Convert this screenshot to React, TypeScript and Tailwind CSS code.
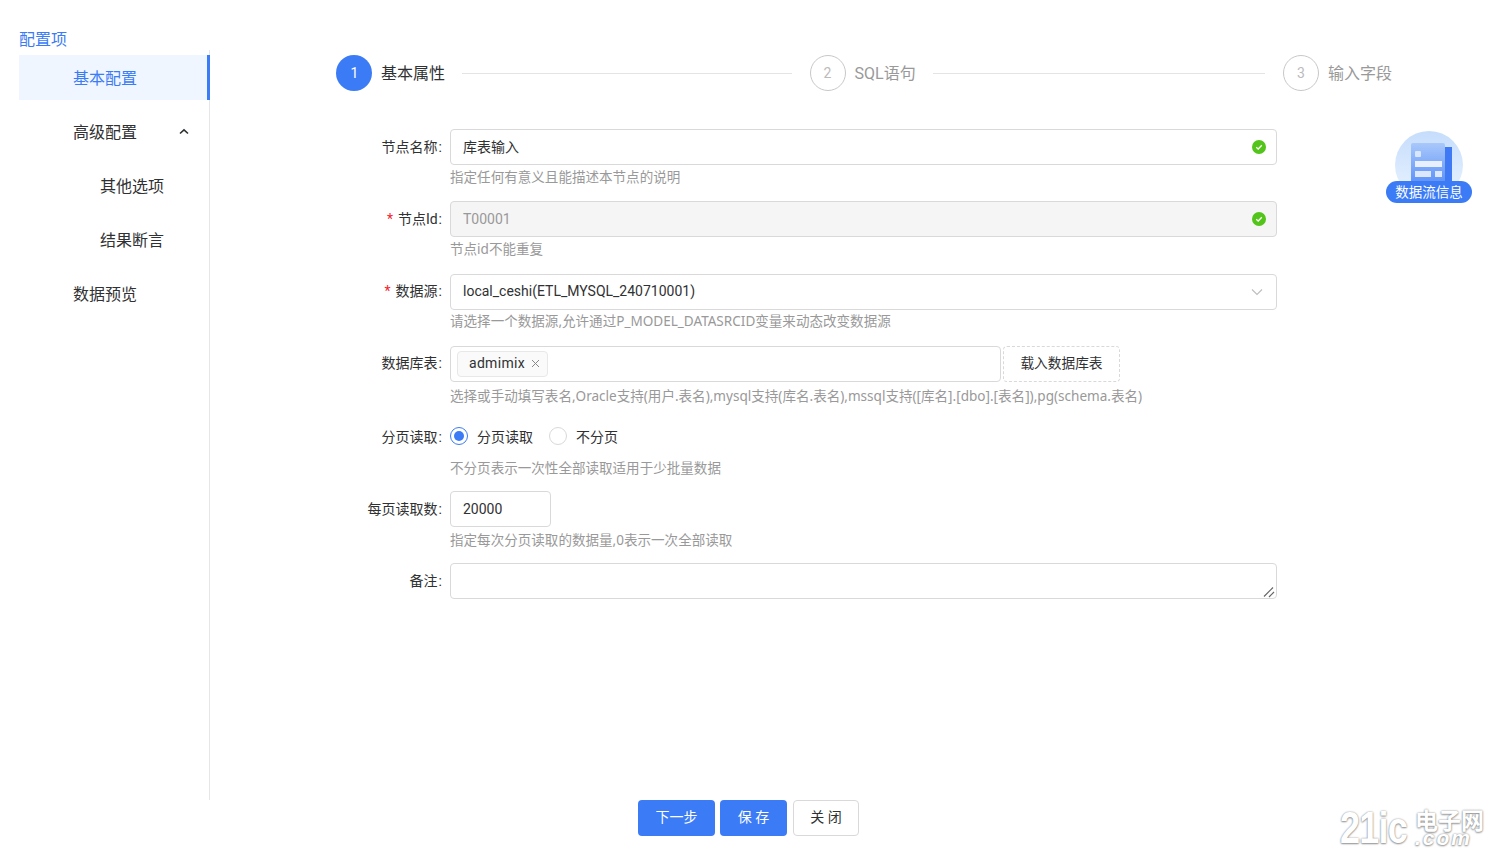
import type { ReactNode } from "react";

const font = "font-['Roboto','Noto_Sans_CJK_SC',sans-serif]";

function CheckBadge() {
  return (
    <svg width="14" height="14" viewBox="0 0 14 14" className="shrink-0">
      <circle cx="7" cy="7" r="7" fill="#52c41a" />
      <path d="M4.2 7.2 6.2 9l3.6-3.8" fill="none" stroke="#fff" strokeWidth="1.3" />
    </svg>
  );
}

function Step({ n, label, active, last }: { n: number; label: string; active?: boolean; last?: boolean }) {
  return (
    <div className={`flex items-center ${last ? "" : "flex-1"}`}>
      <div
        className={
          active
            ? "flex h-9 w-9 shrink-0 items-center justify-center rounded-full bg-[#3b7bf6] pl-[1px] text-sm text-white"
            : "flex h-9 w-9 shrink-0 items-center justify-center rounded-full border border-[#c8c8c8] text-sm text-[#bbbbbb]"
        }
      >
        {n}
      </div>
      <div className={`ml-[9px] shrink-0 pt-[2px] text-base ${active ? "text-[#303133]" : "text-[#999999]"}`}>{label}</div>
      {last ? null : <div className="ml-[17px] mr-[18px] h-px flex-1 bg-[#e4e4e4]" />}
    </div>
  );
}

function Row({ label, required, help, helpClass, labelClass, children }: { label: string; required?: boolean; help?: string; helpClass?: string; labelClass?: string; children: ReactNode }) {
  return (
    <div className="flex h-[72.33px] items-start">
      <div className={`flex h-9 w-[106px] shrink-0 items-center justify-end text-sm text-[#303133] ${labelClass ?? ""}`}>
        {required ? <span className="mr-[5px] text-[#f5222d]">*</span> : null}
        {label}
        <span className="ml-[1px]">:</span>
      </div>
      <div className="ml-2 w-[827px]">
        {children}
        {help ? (
          <div className={`font-['Noto_Sans','Noto_Sans_CJK_SC',sans-serif] text-[13.55px] leading-5 text-[#999999] ${helpClass ?? "mt-[2px]"}`}>{help}</div>
        ) : null}
      </div>
    </div>
  );
}

const box = "flex h-9 items-center rounded border border-[#d9d9d9] pl-[12px] text-sm text-[#303133]";

function Sidebar() {
  return (
    <aside className="w-[210px] shrink-0 pl-[19px]">
      <div className="flex h-[50px] items-end text-base leading-5 text-[#3b7bf6]">配置项</div>
      <div className="h-[750px] border-r border-[#e6e6e6] pt-[5px] text-base text-[#303133]">
        <div className="mr-[-1px] flex h-[45px] items-center border-r-[3px] border-[#3b7bf6] bg-[#f0f6ff] pl-[54px] pt-[2px] text-[#3b7bf6]">基本配置</div>
        <div className="mt-[9px] flex h-[45px] items-center justify-between pl-[54px] pr-[20px] pt-[2px]">
          高级配置
          <svg width="10" height="7" viewBox="0 0 10 7" fill="none" stroke="#303133" strokeWidth="1.6" className="mb-[2px]">
            <path d="M1 5.5 5 1.8l4 3.7" />
          </svg>
        </div>
        <div className="mt-[9px] flex h-[45px] items-center pl-[81px] pt-[2px]">其他选项</div>
        <div className="mt-[9px] flex h-[45px] items-center pl-[81px] pt-[2px]">结果断言</div>
        <div className="mt-[9px] flex h-[45px] items-center pl-[54px] pt-[2px]">数据预览</div>
      </div>
    </aside>
  );
}

function Form() {
  return (
    <div className="mt-[38px]">
      <Row label="节点名称" help="指定任何有意义且能描述本节点的说明">
        <div className={`${box} justify-between pr-[10px]`}>
          库表输入
          <CheckBadge />
        </div>
      </Row>
      <Row label="节点Id" required help="节点id不能重复">
        <div className={`${box} justify-between bg-[#f5f5f5] pr-[10px] text-[#999999]`}>
          T00001
          <CheckBadge />
        </div>
      </Row>
      <Row label="数据源" required help="请选择一个数据源,允许通过P_MODEL_DATASRCID变量来动态改变数据源" helpClass="mt-[1px]" labelClass="pb-[2px]">
        <div className={`${box} justify-between pb-[2px] pr-[13px]`}>
          local_ceshi(ETL_MYSQL_240710001)
          <svg width="12" height="8" viewBox="0 0 12 8" fill="none" stroke="#bdbdbd" strokeWidth="1.1" className="mt-[2px]">
            <path d="M1 1.5 6 6.5l5-5" />
          </svg>
        </div>
      </Row>
      <Row label="数据库表" help="选择或手动填写表名,Oracle支持(用户.表名),mysql支持(库名.表名),mssql支持([库名].[dbo].[表名]),pg(schema.表名)" helpClass="mt-[4px]" labelClass="pb-[2px]">
        <div className="flex items-center gap-[2px]">
          <div className="flex h-9 w-[551px] items-center rounded border border-[#d9d9d9] pl-[6px]">
            <div className="flex h-[26px] items-center rounded-sm border border-[#e8e8e8] bg-[#fafafa] pb-[2px] pl-[11px] pr-[7px] text-sm tracking-[0.3px] text-[#303133]">
              admimix
              <svg width="9" height="9" viewBox="0 0 9 9" stroke="#888888" strokeWidth="1" className="ml-[6px] mt-[2px]">
                <path d="M1 1l7 7M8 1 1 8" />
              </svg>
            </div>
          </div>
          <div className="flex h-9 w-[117px] items-center justify-center rounded border border-dashed border-[#d9d9d9] pb-[2px] text-[13.7px] text-[#303133]">载入数据库表</div>
        </div>
      </Row>
      <Row label="分页读取" help="不分页表示一次性全部读取适用于少批量数据" helpClass="mt-[4px]" labelClass="pt-[2px]">
        <div className="flex h-9 items-center text-sm text-[#303133]">
          <span className="flex h-[18px] w-[18px] items-center justify-center rounded-full border border-[#3b7bf6]">
            <span className="h-[10px] w-[10px] rounded-full bg-[#3b7bf6]" />
          </span>
          <span className="ml-[9px] pt-[2px]">分页读取</span>
          <span className="ml-[16px] h-[18px] w-[18px] rounded-full border border-[#d9d9d9]" />
          <span className="ml-[9px] pt-[2px]">不分页</span>
        </div>
      </Row>
      <Row label="每页读取数" help="指定每次分页读取的数据量,0表示一次全部读取" helpClass="mt-[3px]">
        <div className={`${box} w-[101px]`}>20000</div>
      </Row>
      <Row label="备注">
        <div className="relative">
          <textarea readOnly className="block h-9 w-full resize-none rounded border border-[#d9d9d9] outline-none" />
          <svg width="12" height="12" viewBox="0 0 12 12" stroke="#666666" strokeWidth="1.2" className="absolute bottom-px right-[2px]">
            <path d="M1 10.5 10 1.5M6 11l5-5" />
          </svg>
        </div>
      </Row>
    </div>
  );
}

function DataFlowBadge() {
  return (
    <div className="absolute left-[1386px] top-[131px] h-[72px] w-[86px]">
      <div className="mx-auto h-[68px] w-[68px] rounded-full bg-gradient-to-b from-[#c5ddfc] to-[#eaf3ff] pl-[16px] pt-[12px]">
        <svg width="41" height="42" viewBox="0 0 41 42">
          <defs>
            <linearGradient id="docFill" x1="0" y1="0" x2="0" y2="1">
              <stop offset="0" stopColor="#a9c8fb" />
              <stop offset="1" stopColor="#5a8ff6" />
            </linearGradient>
          </defs>
          <rect x="34" y="4" width="7" height="38" fill="#3f7af4" />
          <rect x="0" y="0" width="34" height="42" rx="2" fill="url(#docFill)" />
          <rect x="4" y="8" width="6" height="6" rx="1" fill="#d8e6ff" />
          <rect x="4" y="18" width="27" height="6" fill="#e8f0ff" />
          <rect x="4" y="28" width="16" height="6" fill="#dce8ff" />
          <rect x="24" y="28" width="7" height="6" fill="#dce8ff" />
        </svg>
      </div>
      <div className="absolute bottom-0 left-0 flex h-[22px] w-[86px] items-center justify-center rounded-full bg-[#3b7bf6] text-[13.5px] text-white">数据流信息</div>
    </div>
  );
}

function Watermark() {
  return (
    <div className="absolute left-[1340px] top-[806px] text-white [text-shadow:0_0_2px_#8a8a8a,0_1px_2px_#9a9a9a]">
      <span className="block origin-left scale-x-[0.82] font-['Liberation_Sans',sans-serif] text-[44px] font-bold leading-[44px] tracking-[-1px]">21ic</span>
      <div className="absolute left-[75px] top-[3px] w-[72px]">
        <div className="font-['Noto_Sans_CJK_SC',sans-serif] text-[23px] font-bold leading-[20px]">电子网</div>
        <div className="font-['Liberation_Sans',sans-serif] text-[21px] font-bold italic leading-[17px] tracking-[2px]">.com</div>
      </div>
    </div>
  );
}

export default function App() {
  return (
    <div className={`relative h-[853px] w-[1494px] overflow-hidden bg-white ${font}`}>
      <div className="flex h-[800px]">
        <Sidebar />
        <main className="w-[1182px] pl-[126px] pt-[55px]">
          <div className="flex w-[1056px] items-center">
            <Step n={1} label="基本属性" active />
            <Step n={2} label="SQL语句" />
            <Step n={3} label="输入字段" last />
          </div>
          <Form />
        </main>
      </div>
      <footer className="flex h-9 items-center pl-[638px] text-sm">
        <button className="h-9 w-[77px] rounded bg-[#3b7bf6] pb-[2px] text-white">下一步</button>
        <button className="ml-[5px] h-9 w-[67px] rounded bg-[#3b7bf6] pb-[2px] text-white">保 存</button>
        <button className="ml-[6px] h-9 w-[66px] rounded border border-[#d9d9d9] pb-[2px] text-[#303133]">关 闭</button>
      </footer>
      <DataFlowBadge />
      <Watermark />
    </div>
  );
}
